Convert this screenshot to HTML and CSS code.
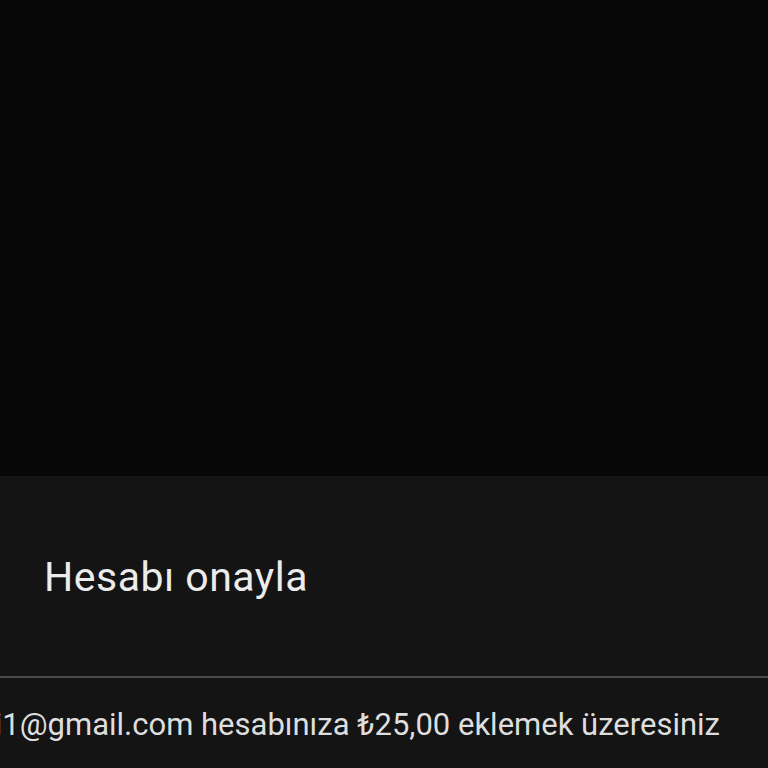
FILE: index.html
```html
<!DOCTYPE html>
<html lang="tr">
<head>
<meta charset="utf-8">
<link rel="stylesheet" href="styles.css">
</head>
<body>
<div class="screen">
  <div class="backdrop"></div>
  <div class="sheet">
    <div class="header">
      <h1 class="title">Hesabı onayla</h1>
    </div>
    <div class="divider"></div>
    <div class="message">
      <p class="msg-text">kullanici1@gmail.com hesabınıza ₺25,00 eklemek üzeresiniz</p>
    </div>
  </div>
</div>
</body>
</html>
```
FILE: styles.css
```css
html, body {
  margin: 0;
  padding: 0;
  background: #070707;
}
.screen {
  width: 768px;
  height: 768px;
  display: flex;
  flex-direction: column;
  overflow: hidden;
  font-family: Roboto, "Noto Sans", sans-serif;
}
.backdrop {
  height: 476px;
  background: #070707;
  flex: none;
}
.sheet {
  flex: 1;
  background: #141414;
  display: flex;
  flex-direction: column;
}
.header {
  height: 200px;
  display: flex;
  align-items: flex-end;
  padding-left: 44px;
  flex: none;
}
.title {
  margin: 0 0 78px 0;
  font-size: 41px;
  font-weight: 400;
  color: #ececec;
  line-height: 1;
  letter-spacing: 0.5px;
}
.divider {
  height: 2px;
  background: #4a4a4a;
  flex: none;
}
.message {
  display: flex;
  justify-content: flex-end;
  padding-right: 48px;
  overflow: hidden;
}
.msg-text {
  margin: 27px 0 0 0;
  white-space: nowrap;
  font-size: 31px;
  line-height: 40px;
  color: #dedede;
  flex: none;
}
```
